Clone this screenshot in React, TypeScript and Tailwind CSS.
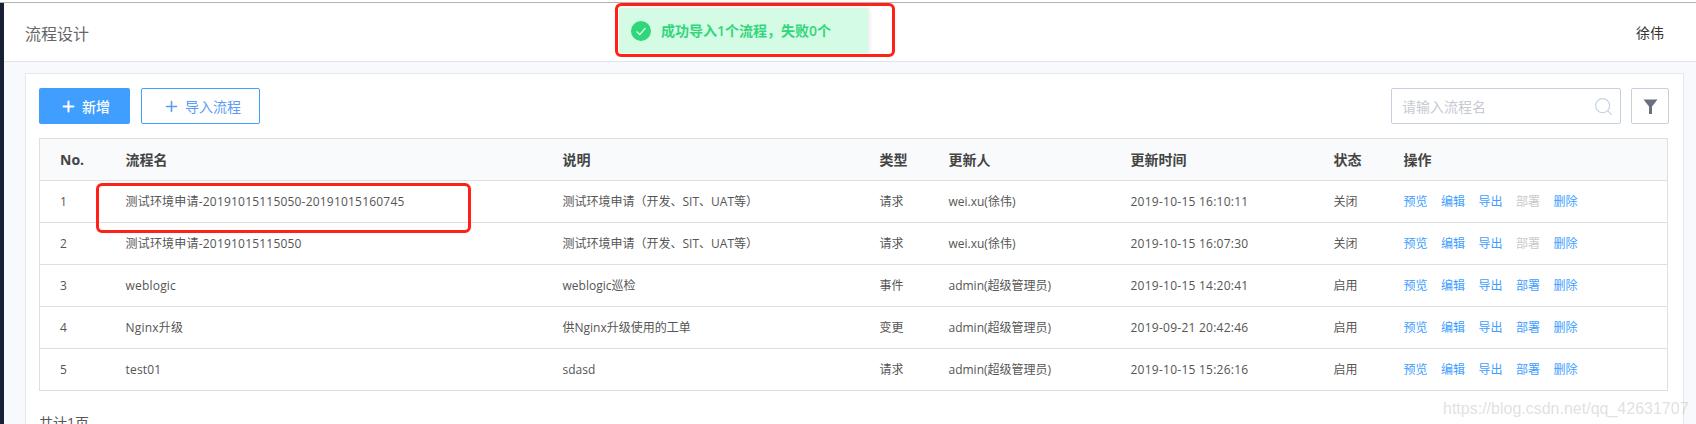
import { Plus, Search } from "lucide-react"

const rows = [
  { no: 1, name: "测试环境申请-20191015115050-20191015160745", desc: "测试环境申请（开发、SIT、UAT等）", type: "请求", user: "wei.xu(徐伟)", time: "2019-10-15 16:10:11", status: "关闭", deployable: false },
  { no: 2, name: "测试环境申请-20191015115050", desc: "测试环境申请（开发、SIT、UAT等）", type: "请求", user: "wei.xu(徐伟)", time: "2019-10-15 16:07:30", status: "关闭", deployable: false },
  { no: 3, name: "weblogic", desc: "weblogic巡检", type: "事件", user: "admin(超级管理员)", time: "2019-10-15 14:20:41", status: "启用", deployable: true },
  { no: 4, name: "Nginx升级", desc: "供Nginx升级使用的工单", type: "变更", user: "admin(超级管理员)", time: "2019-09-21 20:42:46", status: "启用", deployable: true },
  { no: 5, name: "test01", desc: "sdasd", type: "请求", user: "admin(超级管理员)", time: "2019-10-15 15:26:16", status: "启用", deployable: true },
]

const headers = ["No.", "流程名", "说明", "类型", "更新人", "更新时间", "状态", "操作"]

function Actions({ deployable }: { deployable: boolean }) {
  return (
    <div className="flex gap-[13.5px] text-[#409eff]">
      <span>预览</span>
      <span>编辑</span>
      <span>导出</span>
      <span className={deployable ? "" : "text-[#c8c9cc]"}>部署</span>
      <span>删除</span>
    </div>
  )
}

export default function App() {
  return (
    <div className="relative flex flex-col w-[1696px] h-[424px] overflow-hidden bg-white font-['Open_Sans','Noto_Sans_CJK_SC',sans-serif]">
      <div className="h-[2px] shrink-0 bg-white" />
      <div className="h-px shrink-0 bg-[#b4b4b4]" />
      <div className="flex flex-1 min-h-0">
        <div className="w-1 shrink-0 bg-[#172034]" />
        <div className="flex flex-col flex-1 min-w-0 bg-[#f8f9fd]">
          <header className="flex h-[59px] shrink-0 items-center justify-between pl-[21px] pr-[32px] pt-[3px] bg-white border-b border-[#dfe4ed]">
            <h4 className="text-[16px] text-[#666]">流程设计</h4>
            <span className="mb-[2px] text-[14px] text-[#333]">徐伟</span>
          </header>
          <div className="flex-1 ml-[21px] mr-[12px] mt-[11px] pl-[13px] pr-[14px] pt-[14px] bg-white border border-[#e4e7ed]">
            <div className="flex justify-between h-[36px]">
              <div className="flex gap-[11px]">
                <button className="flex items-center w-[91px] pl-[20.5px] gap-[5.5px] rounded-[2px] bg-[#409eff] text-white text-[14px] font-medium">
                  <Plus size={17} strokeWidth={2.8} />
                  新增
                </button>
                <button className="flex items-center w-[119px] pl-[20.5px] gap-[5.5px] rounded-[2px] border border-[#409eff] bg-white text-[#5a9cf5] text-[14px]">
                  <Plus size={17} strokeWidth={2.2} />
                  导入流程
                </button>
              </div>
              <div className="flex gap-[10px]">
                <div className="flex items-center w-[230px] pl-[10px] pr-[6px] rounded-[2px] border border-[#c5d0de] bg-white">
                  <input
                    readOnly
                    placeholder="请输入流程名"
                    className="flex-1 min-w-0 text-[14px] outline-none placeholder:text-[#c6cad1]"
                  />
                  <Search size={21} strokeWidth={1.4} className="text-[#c5d3e2]" />
                </div>
                <button className="flex items-center justify-center w-[38px] rounded-[2px] border border-[#c5d0de] bg-white">
                  <svg width="15" height="15" viewBox="0 0 15 15">
                    <path d="M0.5 0.5H14.5L9 7.5V15H6V7.5Z" fill="#6b7080" />
                  </svg>
                </button>
              </div>
            </div>
            <table className="table-fixed w-[1629px] mt-[14px] border-collapse border border-[#dfdfdf] text-[12px] text-[#555]">
              <colgroup>
                <col className="w-[86px]" />
                <col className="w-[437px]" />
                <col className="w-[317px]" />
                <col className="w-[69px]" />
                <col className="w-[182px]" />
                <col className="w-[203px]" />
                <col className="w-[70px]" />
                <col />
              </colgroup>
              <thead>
                <tr className="h-[42px] bg-[#f9fafc]">
                  {headers.map((h, i) => (
                    <th key={h} className={`text-left text-[14px] font-bold text-[#444] ${i === 0 ? "pl-[20px]" : ""}`}>
                      {h}
                    </th>
                  ))}
                </tr>
              </thead>
              <tbody>
                {rows.map((r) => (
                  <tr key={r.no} className="h-[42px] border-t border-[#dfdfdf]">
                    <td className="pl-[20px]">{r.no}</td>
                    <td className="tracking-[0.2px]">{r.name}</td>
                    <td>{r.desc}</td>
                    <td>{r.type}</td>
                    <td>{r.user}</td>
                    <td className="tracking-[0.25px]">{r.time}</td>
                    <td>{r.status}</td>
                    <td>
                      <Actions deployable={r.deployable} />
                    </td>
                  </tr>
                ))}
              </tbody>
            </table>
            <p className="mt-[21px] text-[14px] text-[#555]">共计1页</p>
          </div>
        </div>
      </div>

      {/* 成功提示 */}
      <div className="absolute left-[619px] top-[8px] flex items-center w-[249px] h-[45px] pl-[12px] gap-[10px] bg-[#d4fbe4] shadow-[2px_0_4px_rgba(0,0,0,0.08)] text-[14px] font-semibold text-[#33d67c]">
        <svg width="20" height="20" viewBox="0 0 20 20">
          <circle cx="10" cy="10" r="10" fill="#2fd67a" />
          <path d="M5.5 10.5L8.8 13.5L14.5 7" fill="none" stroke="#d4fbe4" strokeWidth="1.3" />
        </svg>
        <span>成功导入1个流程，失败0个</span>
      </div>

      {/* 截图上的红框标注 */}
      <div className="absolute left-[615px] top-[3px] w-[280px] h-[54px] rounded-[6px] border-[3px] border-[#ff2016]" />
      <div className="absolute left-[96px] top-[183px] w-[375px] h-[50px] rounded-[6px] border-[3px] border-[#ff2016]" />

      <span className="absolute left-[1443px] top-[397px] text-[16px] font-['Liberation_Sans',sans-serif] text-[#b0b0b0]/40">
        https://blog.csdn.net/qq_42631707
      </span>
    </div>
  )
}
